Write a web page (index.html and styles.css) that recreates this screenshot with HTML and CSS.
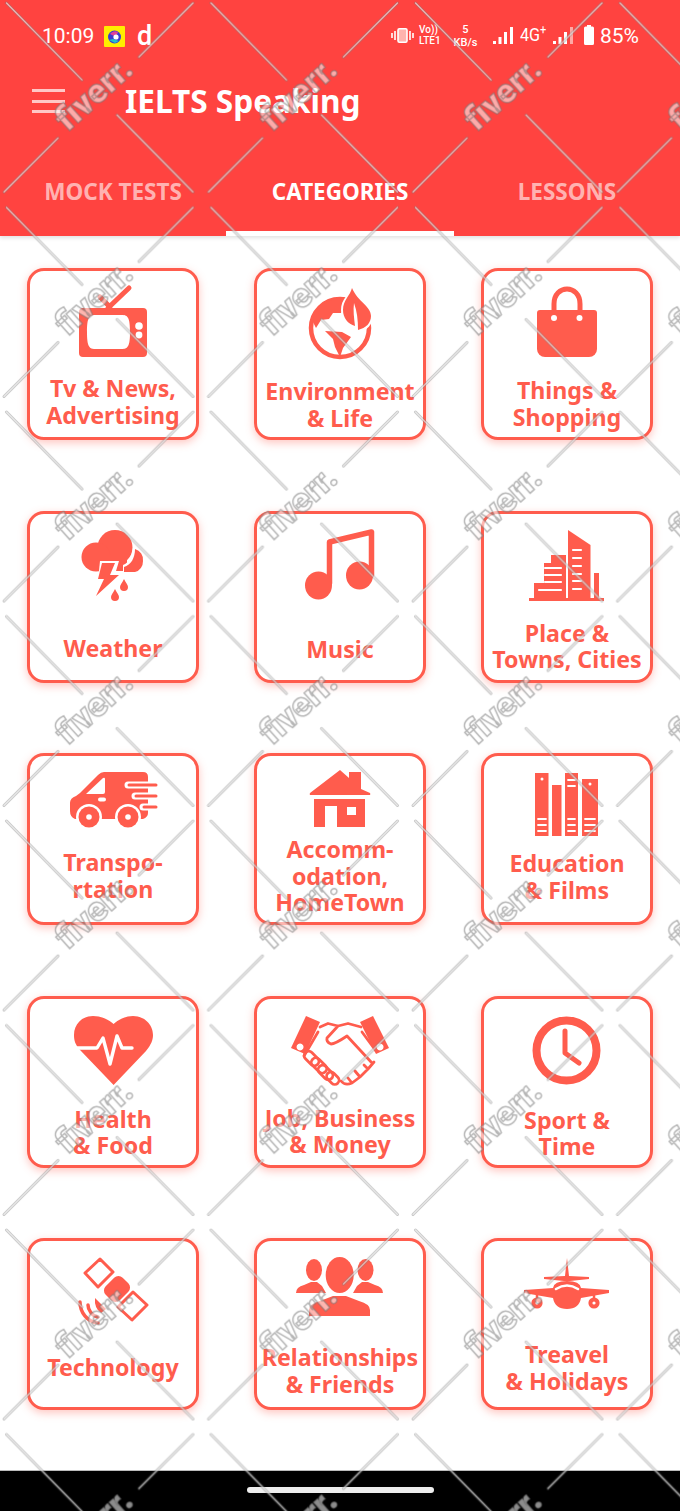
FILE: index.html
```html
<!DOCTYPE html>
<html lang="en">
<head>
    <meta charset="UTF-8">
    <meta name="viewport" content="width=device-width, initial-scale=1.0">
    <title>IELTS Speaking</title>
    <link rel="stylesheet" href="styles.css">
</head>
<body>
<div class="phone">
    <header class="appbar">
        <div class="status">
            <span class="clock">10:09</span>
            <svg class="app-badge" viewBox="0 0 21 21"><rect width="21" height="21" rx="1" fill="#ffee00"/><circle cx="10.5" cy="11" r="6.5" fill="#3b3bd0"/><path d="M6 8a6 6 0 0 1 8-2l-2 5z" fill="#e0409a"/><circle cx="12" cy="11" r="2.6" fill="#fff"/><path d="M5 14l6 3 4-2-6-2z" fill="#22c0c8"/></svg>
            <span class="status-d">d</span>
            <span class="status-gap"></span>
            <svg class="vibrate" viewBox="0 0 23 15"><rect x="7" y="0.8" width="9" height="13.4" rx="1.4" fill="#ffb3ae" stroke="#fff" stroke-width="1.6"/><path d="M4 3v9M1 5v5M19 3v9M22 5v5" stroke="#fff" stroke-width="1.6" fill="none"/></svg>
            <span class="volte">Vo))<br>LTE1</span>
            <span class="speed">5<br>KB/s</span>
            <svg class="signal" viewBox="0 0 20 17"><path d="M0 14h3v3H0zM5.500 10h3v7h-3zM11 5h3v12h-3zM17 0h3v17h-3z" fill="#fff"/></svg>
            <span class="net">4G<sup>+</sup></span>
            <svg class="signal" viewBox="0 0 20 17"><path d="M0 14h3v3H0zM5.500 10h3v7h-3zM11 5h3v12h-3z" fill="#fff"/><path d="M17 0h3v17h-3z" fill="#ffa9a5"/></svg>
            <svg class="battery" viewBox="0 0 10 20"><path d="M3 0h4v1.500h1.500A1.500 1.500 0 0 1 10 3v15.500a1.500 1.500 0 0 1-1.500 1.500h-7A1.500 1.500 0 0 1 0 18.500V3a1.500 1.500 0 0 1 1.500-1.500H3z" fill="#fff"/></svg>
            <span class="percent">85%</span>
        </div>
        <div class="toolbar">
            <div class="burger"><i></i><i></i><i></i></div>
            <h1 class="title">IELTS Speaking</h1>
        </div>
        <nav class="tabs">
            <a class="tab">MOCK TESTS</a>
            <a class="tab tab-active">CATEGORIES</a>
            <a class="tab">LESSONS</a>
        </nav>
    </header>

    <main class="grid">
        <div class="card">
            <svg class="icon" viewBox="-60 3 120 100">
                <path fill-rule="evenodd" d="M-30 40H30a4 4 0 0 1 4 4V85a4 4 0 0 1-4 4H-30a4 4 0 0 1-4-4V44a4 4 0 0 1 4-4zM-18 47C-24 47-26 50-26 64S-24 81-18 81H9C15 81 17 78 17 64S15 47 9 47z"/>
                <path class="line" d="M-5 40L16 20M-3 39L-13 29" stroke-width="5"/>
                <circle class="cut" cx="26" cy="58" r="3.800"/><circle class="cut" cx="26" cy="67" r="3.400"/>
            </svg>
            <div class="label at-104">Tv &amp; News,<br>Advertising</div>
        </div>
        <div class="card">
            <svg class="icon" viewBox="-60 3 120 100">
                <circle class="line" cx="0" cy="60" r="29" stroke-width="4.500"/>
                <path d="M-27 54C-27 44-20 35-8 32L4 32L6 38L1 45L-7 45L-11 51L-19 52L-24 60zM-15 63L2 64L11 69L3 80L0 89L-5 79L-7 71zM-4 38h4v3h-4z"/>
                <path class="cut" d="M12 17C9 27 1 31 1 42C1 50 6 56 12 59L18 65C27 63 33 56 33 48C33 36 18 33 12 17z"/>
                <path d="M12 20C10 28 3 32 3 42C3 50 8 56 15 58C14 50 13 42 14 35C17 43 18 52 18 62C26 60 31 55 31 48C31 38 18 34 12 20z"/>
            </svg>
            <div class="label at-107">Environment<br>&amp; Life</div>
        </div>
        <div class="card">
            <svg class="icon" viewBox="-60 3 120 100">
                <path class="line" d="M-13 46V36C-13 16 13 16 13 36V46" stroke-width="5"/>
                <path d="M-27 42H27a3 3 0 0 1 3 3V81a8 8 0 0 1-8 8H-22a8 8 0 0 1-8-8V45a3 3 0 0 1 3-3z"/>
                <circle class="cut" cx="-13" cy="50" r="3"/><circle class="cut" cx="12.500" cy="50" r="3"/>
            </svg>
            <div class="label at-106">Things &amp;<br>Shopping</div>
        </div>

        <div class="card">
            <svg class="icon" viewBox="-60 3 120 100">
                <circle cx="2" cy="36.500" r="17.500"/><circle cx="-17" cy="46" r="14.500"/>
                <path d="M-17 44H14V60H-17z"/>
                <path class="cut" d="M20 34A13 13 0 0 1 22 60H10V54C16 52 20 44 20 34z"/>
                <path d="M22 38A11 11 0 0 1 30 50A11 11 0 0 1 22 61H11V56C18 54 22 47 22 38z"/>
                <path class="cut" d="M-13 50H6L3 60H-14z"/>
                <path d="M-11 52H2L-3 64H6L-17 85L-9 68H-15z"/>
                <path d="M11 68C13 72 15 74 15 76A4 4 0 0 1 7 76C7 74 9 72 11 68zM2 78C4 82 6 84 6 86A4 4 0 0 1-2 86C-2 84 0 82 2 78z"/>
            </svg>
            <div class="label at-121">Weather</div>
        </div>
        <div class="card">
            <svg class="icon" viewBox="-60 3 120 100">
                <path class="line" d="M-10.500 72V31L31.500 21V64" stroke-width="5.500"/>
                <ellipse cx="-21.500" cy="74.500" rx="13.500" ry="14"/><ellipse cx="19.500" cy="64.500" rx="13.500" ry="14"/>
            </svg>
            <div class="label at-122">Music</div>
        </div>
        <div class="card">
            <svg class="icon" viewBox="-60 3 120 100">
                <path d="M1 19L23.500 34V87H1z"/>
                <path d="M-33 87V72H-23V52H-16V44H-1V87z"/>
                <path d="M27 62H32V87H27zM-38 87H37V90H-38z"/>
                <path class="line-cut" d="M6 39H14M6 47H14M6 55H14M6 63H14M6 70H14M6 78H14M-22 57H-6M-22 64H-6M-22 71H-6M-28 79H-6" stroke-width="2.200"/>
            </svg>
            <div class="label at-106">Place &amp;<br>Towns, Cities</div>
        </div>

        <div class="card">
            <svg class="icon" viewBox="-60 3 120 100">
                <path d="M-43 50Q-43 45-37 43L-33 40L-15 22Q-12 19-9 19H30Q35 19 35 24V60Q35 64 30 66H-38Q-43 64-43 58z"/>
                <path class="line-cut" d="M15 32H44M22 43H44M30 54H44" stroke-width="7"/>
                <path class="line" d="M16 32H43M23 43H43M31 54H43" stroke-width="3"/>
                <path class="cut" d="M-27 41L-10 25Q-8 24-8 26V39Q-8 41-10 41z"/>
                <rect class="cut" x="-15" y="44.500" width="8" height="4" rx="2"/>
                <circle class="cut" cx="-24" cy="64" r="13"/><circle class="cut" cx="15" cy="64" r="13"/>
                <circle cx="-24" cy="64" r="10.500"/><circle cx="15" cy="64" r="10.500"/>
                <circle class="cut" cx="-24" cy="64" r="2.800"/><circle class="cut" cx="15" cy="64" r="2.800"/>
            </svg>
            <div class="label at-93">Transpo-<br>rtation</div>
        </div>
        <div class="card">
            <svg class="icon" viewBox="-60 3 120 100">
                <path d="M0 17L9 25V19H21V36L30 40Q31 42 29 42H-29Q-31 42-30 40z"/>
                <path fill-rule="evenodd" d="M-26 46H25V74H-26zM-15 53V74H-3V53zM7 54V62H16V54z"/>
            </svg>
            <div class="label at-80">Accomm-<br>odation,<br>HomeTown</div>
        </div>
        <div class="card">
            <svg class="icon" viewBox="-60 3 120 100">
                <path d="M-32 20H-18.500V83H-32zM-15 32H-5.500V83H-15zM-2 20H11V83H-2zM15 26H31V83H15z"/>
                <path class="line-cut" d="M-29 66H-21M-29 72H-21M-29 78H-21M1 66H8M1 72H8M1 78H8M18 66H28M18 72H28M18 78H28M1 27H8M1 33H8" stroke-width="1.800"/>
                <circle class="cut" cx="-25" cy="26" r="1.500"/><circle class="cut" cx="23" cy="31" r="1.500"/>
            </svg>
            <div class="label at-94">Education<br>&amp; Films</div>
        </div>

        <div class="card">
            <svg class="icon" viewBox="-60 3 120 100">
                <path d="M0.600 89L-32 55C-38 49-39 44-39 39C-39 28-31 20-20 20C-11 20-4 24 0.600 28C5 24 12 20 20 20C31 20 40 28 40 39C40 44 38 49 33 55z"/>
                <path class="line-cut" d="M-42 52H-16L-10 42L-3 68L4 40L9 52H19" stroke-width="3.400"/>
            </svg>
            <div class="label at-107">Health<br>&amp; Food</div>
        </div>
        <div class="card">
            <svg class="icon" viewBox="-60 3 120 100">
                <path fill-rule="evenodd" d="M-34 20L-20 26L-35 58L-49 52zM-40 47.500a3.500 3.500 0 1 0 .1 0z"/>
                <path fill-rule="evenodd" d="M33 20L20 26L36 58L49 52zM40 47.500a3.500 3.500 0 1 0 .1 0z"/>
                <path class="line" stroke-width="2.800" d="M-20 31L-12 27.500L-2 30L8 27.500L21 31M-2 30L-13 42Q-14 46-9 48Q-5 48 7 40L32 67M-22 36L-36 60M22 36L36 55M34 66L28 73L24 69M28 73L20 81L15 75M20 81L12 87L8 82M12 87Q5 90 1 85"/>
                <g class="line" stroke-width="2.800">
                    <rect x="-37" y="58" width="17" height="9" rx="4.500" transform="rotate(45 -28.500 62.500)"/>
                    <rect x="-30" y="65" width="18" height="9" rx="4.500" transform="rotate(45 -21 69.500)"/>
                    <rect x="-23" y="72" width="17" height="9" rx="4.500" transform="rotate(45 -14.500 76.500)"/>
                    <rect x="-14" y="78" width="14" height="8.500" rx="4.200" transform="rotate(45 -7 82)"/>
                </g>
            </svg>
            <div class="label at-106">Job, Business<br>&amp; Money</div>
        </div>
        <div class="card">
            <svg class="icon" viewBox="-60 3 120 100">
                <circle class="line" cx="-0.500" cy="54.500" r="30" stroke-width="8"/>
                <path class="line" d="M-2 35V57L12 67" stroke-width="5"/>
            </svg>
            <div class="label at-108">Sport &amp;<br>Time</div>
        </div>

        <div class="card">
            <svg class="icon" viewBox="-60 3 120 100">
                <path class="line" stroke-width="3" d="M-13 21L0 34L-15 49L-28 35zM20 54L34 67L19 82L5 69z"/>
                <rect x="-8" y="41" width="24" height="20" rx="6" transform="rotate(-45 4 51)"/>
                <path class="line" stroke-width="3.500" d="M-33 64C-33 74-26 84-15 85M-25 67C-25 72-21 78-15 79"/>
                <path d="M-18 60L-7 71L-12 75Q-19 70-18 60z"/>
            </svg>
            <div class="label at-113">Technology</div>
        </div>
        <div class="card">
            <svg class="icon" viewBox="-60 3 120 100">
                <ellipse cx="-26" cy="32" rx="8" ry="11"/><ellipse cx="25.500" cy="32" rx="8" ry="11"/>
                <path d="M-44 55Q-44 49-36 47L-29 44H-23L-18 48L-14 55zM43 55Q43 49 35 47L28 44H22L17 48L13 55z"/>
                <ellipse class="cut" cx="-0.300" cy="37" rx="16" ry="20"/>
                <ellipse cx="-0.300" cy="37" rx="14" ry="18"/>
                <path d="M-31 78V72Q-31 66-20 63L-7 58H6L19 63Q30 66 30 72V78z"/>
            </svg>
            <div class="label at-103">Relationships<br>&amp; Friends</div>
        </div>
        <div class="card">
            <svg class="icon" viewBox="-60 3 120 100">
                <path d="M0 20L2 38L22 39V41L3 43H-3L-23 41V39L-2 38z"/>
                <path d="M-14 50Q-13 43 0 43Q13 43 14 50L42 52V55L14 60Q12 71 0 71Q-12 71-14 60L-43 55V52z"/>
                <path class="line-cut" d="M-11 51Q0 44 11 51" stroke-width="2.600"/>
                <path class="line" d="M-30 57V60M27 57V60" stroke-width="2.500"/>
                <circle class="line" cx="-30" cy="65" r="3.600" stroke-width="4"/><circle class="line" cx="27" cy="65" r="3.600" stroke-width="4"/>
            </svg>
            <div class="label at-100">Treavel<br>&amp; Holidays</div>
        </div>
    </main>

    <footer class="navbar"><span class="pill"></span></footer>

    <!-- watermark sits over everything -->
    <svg class="watermark" width="680" height="1511">
        <defs>
            <pattern id="wm" width="204.500" height="204.500" patternUnits="userSpaceOnUse">
                <path class="wm-edge" d="M6.500 3L82 80M117 115L193 192M193 3L139 57M58 138L4 192"/>
                <path class="wm-core" d="M6.500 3L82 80M117 115L193 192M193 3L139 57M58 138L4 192"/>
                <text class="wm-text" transform="translate(94 94) rotate(-42)" text-anchor="middle" y="11">fiverr.</text>
            </pattern>
        </defs>
        <rect width="680" height="1511" fill="url(#wm)"/>
    </svg>
</div>
</body>
</html>
```

FILE: styles.css
```css
* {
    box-sizing: border-box;
}

body {
    margin: 0;
    font-family: "Noto Sans", sans-serif;
    background-color: #fff;
}

.phone {
    position: relative;
    width: 680px;
    height: 1511px;
    display: flex;
    flex-direction: column;
    overflow: hidden;
}

.appbar {
    height: 236px;
    background-color: #ff4340;
    color: #fff;
    box-shadow: 0 2px 4px rgba(0,0,0,0.12);
    flex-shrink: 0;
}

.status {
    height: 72px;
    padding: 24px 41px 0 42px;
    display: flex;
    align-items: flex-start;
    font-family: Roboto, sans-serif;
}

.clock {
    font-size: 21px;
    line-height: 24px;
    width: 62px;
}

.app-badge {
    width: 21px;
    height: 21px;
    margin-top: 2px;
}

.status-d {
    font-size: 27px;
    line-height: 24px;
    font-weight: 500;
    margin-left: 12px;
}

.status-gap {
    flex: 1;
}

.vibrate {
    width: 23px;
    height: 15px;
    margin: 4px 5px 0 0;
}

.volte {
    font-size: 10px;
    line-height: 10.500px;
    font-weight: 500;
    width: 33px;
    margin-top: 1px;
}

.speed {
    font-size: 11px;
    line-height: 13px;
    font-weight: 500;
    text-align: center;
    width: 27px;
    margin-top: -1px;
}

.signal {
    width: 20px;
    height: 17px;
    margin: 3px 0 0 14px;
}

.net {
    font-size: 19px;
    line-height: 22px;
    margin-left: 7px;
    transform: scaleX(0.85);
    transform-origin: left;
    width: 23px;
}

.net sup {
    font-size: 13px;
    line-height: 0;
}

.net + .signal {
    margin-left: 10px;
}

.battery {
    width: 10px;
    height: 20px;
    margin: 1px 0 0 11px;
}

.percent {
    font-size: 21px;
    line-height: 24px;
    margin-left: 6px;
}

.toolbar {
    height: 58px;
    padding-left: 32px;
    display: flex;
    align-items: center;
}

.burger {
    width: 33px;
}

.burger i {
    display: block;
    height: 3px;
    margin-bottom: 7.500px;
    background-color: rgba(255,255,255,0.7);
}

.burger i:last-child {
    margin-bottom: 0;
}

.title {
    margin: 0 0 0 60px;
    font-size: 31.600px;
    line-height: 40px;
    font-weight: 700;
}

.tabs {
    height: 106px;
    display: grid;
    grid-template-columns: 226px 228px 1fr;
}

.tab {
    display: block;
    text-align: center;
    font-size: 22.500px;
    font-weight: 700;
    line-height: 28px;
    padding-top: 48px;
    color: rgba(255,255,255,0.6);
}

.tab-active {
    color: #fff;
    border-bottom: 5px solid #fff;
}

.grid {
    flex: 1;
    padding: 32px 27px 0;
    display: grid;
    grid-template-columns: repeat(3, 172px);
    grid-auto-rows: 172px;
    column-gap: 55px;
    row-gap: 70.500px;
    align-content: start;
}

.card {
    display: grid;
    justify-items: center;
    align-items: start;
    border: 3px solid #ff5c4d;
    border-radius: 17px;
    background-color: #fff;
    box-shadow: 0 3px 8px rgba(255,92,77,0.35);
}

.card > * {
    grid-area: 1 / 1;
}

.icon {
    width: 120px;
    height: 100px;
    fill: #ff5c4d;
}

.icon .cut {
    fill: #fff;
}

.icon .line {
    fill: none;
    stroke: #ff5c4d;
    stroke-linecap: round;
    stroke-linejoin: round;
}

.icon .line-cut {
    fill: none;
    stroke: #fff;
    stroke-linecap: round;
    stroke-linejoin: round;
}

.label {
    font-size: 23.200px;
    line-height: 26.500px;
    font-weight: 700;
    color: #ff5c4d;
    text-align: center;
    white-space: nowrap;
}

.at-80 { margin-top: 80px; }
.at-93 { margin-top: 93px; }
.at-94 { margin-top: 94px; }
.at-100 { margin-top: 100px; }
.at-103 { margin-top: 103px; }
.at-104 { margin-top: 104px; }
.at-106 { margin-top: 106px; }
.at-107 { margin-top: 107px; }
.at-108 { margin-top: 108px; }
.at-113 { margin-top: 113px; }
.at-121 { margin-top: 121px; }
.at-122 { margin-top: 122px; }

.navbar {
    height: 41px;
    background-color: #000;
    border-top: 1px solid #bbb;
    display: flex;
    justify-content: center;
    padding-top: 16px;
    flex-shrink: 0;
}

.pill {
    width: 187px;
    height: 6px;
    border-radius: 3px;
    background-color: #eee;
}

.watermark {
    position: absolute;
    left: 0;
    top: 0;
    pointer-events: none;
}

.wm-edge {
    fill: none;
    stroke: rgba(120,120,120,0.42);
    stroke-width: 3;
    stroke-linecap: round;
}

.wm-core {
    fill: none;
    stroke: rgba(255,255,255,0.6);
    stroke-width: 1.200;
    stroke-linecap: round;
}

.wm-text {
    font-family: Roboto, sans-serif;
    font-size: 34px;
    font-weight: 900;
    fill: rgba(255,255,255,0.55);
    stroke: rgba(110,110,110,0.5);
    stroke-width: 1.500;
}
```
